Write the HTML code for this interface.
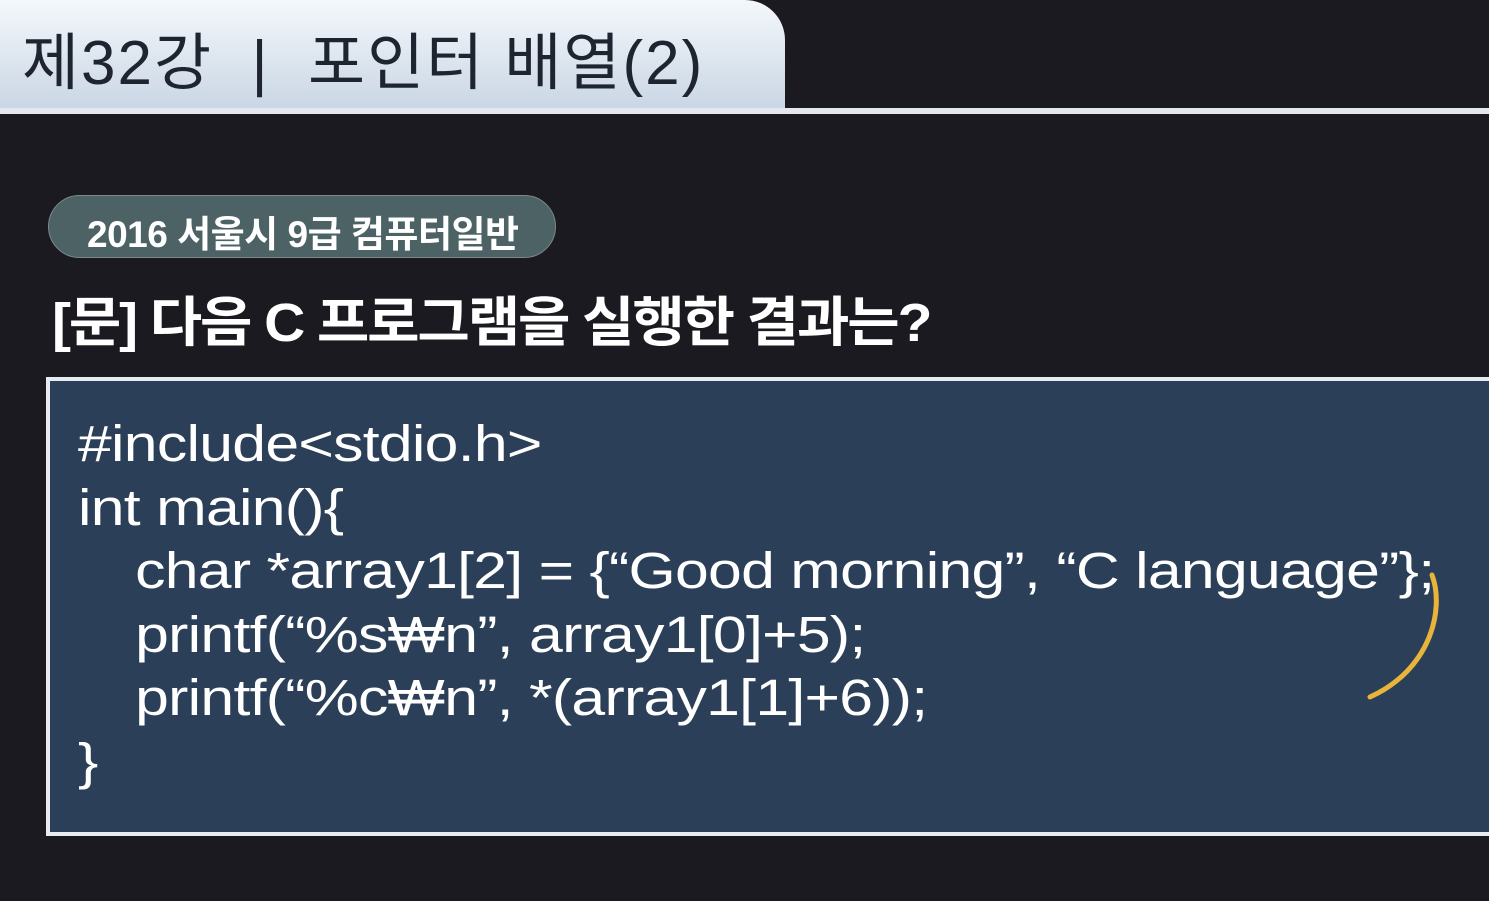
<!DOCTYPE html>
<html><head><meta charset="utf-8"><style>
body{margin:0;width:1489px;height:901px;overflow:hidden;background:#1b1a20;font-family:"Liberation Sans","Noto Sans CJK KR",sans-serif;position:relative}
.tab{position:absolute;left:0;top:0;width:785px;height:110px;background:linear-gradient(#f4f8fc,#c9d6e4);border-top-right-radius:40px;}
.tab span{position:absolute;left:22px;top:12px;font-size:62px;color:#1e2430;letter-spacing:2px;white-space:nowrap}
.line{position:absolute;left:0;top:108px;width:1489px;height:6px;background:#e4e8ee}
.pill{position:absolute;left:48px;top:195px;width:508px;height:63px;border-radius:32px;background:#4d6264;border:1px solid #7a8a8c;box-sizing:border-box}
.pill span{position:absolute;left:38px;top:8px;font-size:37px;font-weight:bold;color:#fff;letter-spacing:-0.5px;white-space:nowrap}
.q{position:absolute;left:52px;top:278px;font-size:54px;font-weight:bold;color:#fff;letter-spacing:-2px;white-space:nowrap;transform:scaleX(1.055);transform-origin:left}
.box{position:absolute;left:46px;top:377px;width:1460px;height:459px;border:4px solid #e8ecf2;background:#2c3f58;box-sizing:border-box}
.code{position:absolute;left:78px;top:412px;font-size:51px;line-height:63.5px;color:#fff;letter-spacing:-0.6px;white-space:pre;transform:scaleX(1.19);transform-origin:left}
.code i{font-style:normal;display:inline-block;margin-left:48px}
</style></head><body>
<div class="tab"><span>제32강 &nbsp;| &nbsp;포인터 배열(2)</span></div>
<div class="line"></div>
<div class="pill"><span>2016 서울시 9급 컴퓨터일반</span></div>
<div class="q">[문] 다음 C 프로그램을 실행한 결과는?</div>
<div class="box"></div>
<div class="code">#include&lt;stdio.h&gt;
int main(){
<i>char *array1[2] = {“Good morning”, “C language”};</i>
<i>printf(“%s₩n”, array1[0]+5);</i>
<i>printf(“%c₩n”, *(array1[1]+6));</i>
}</div>
<svg style="position:absolute;left:0;top:0" width="1489" height="901"><path d="M1432 575 C1445 610 1430 670 1370 697" stroke="#e8b43a" stroke-width="5" fill="none" stroke-linecap="round"/></svg>
</body></html>
